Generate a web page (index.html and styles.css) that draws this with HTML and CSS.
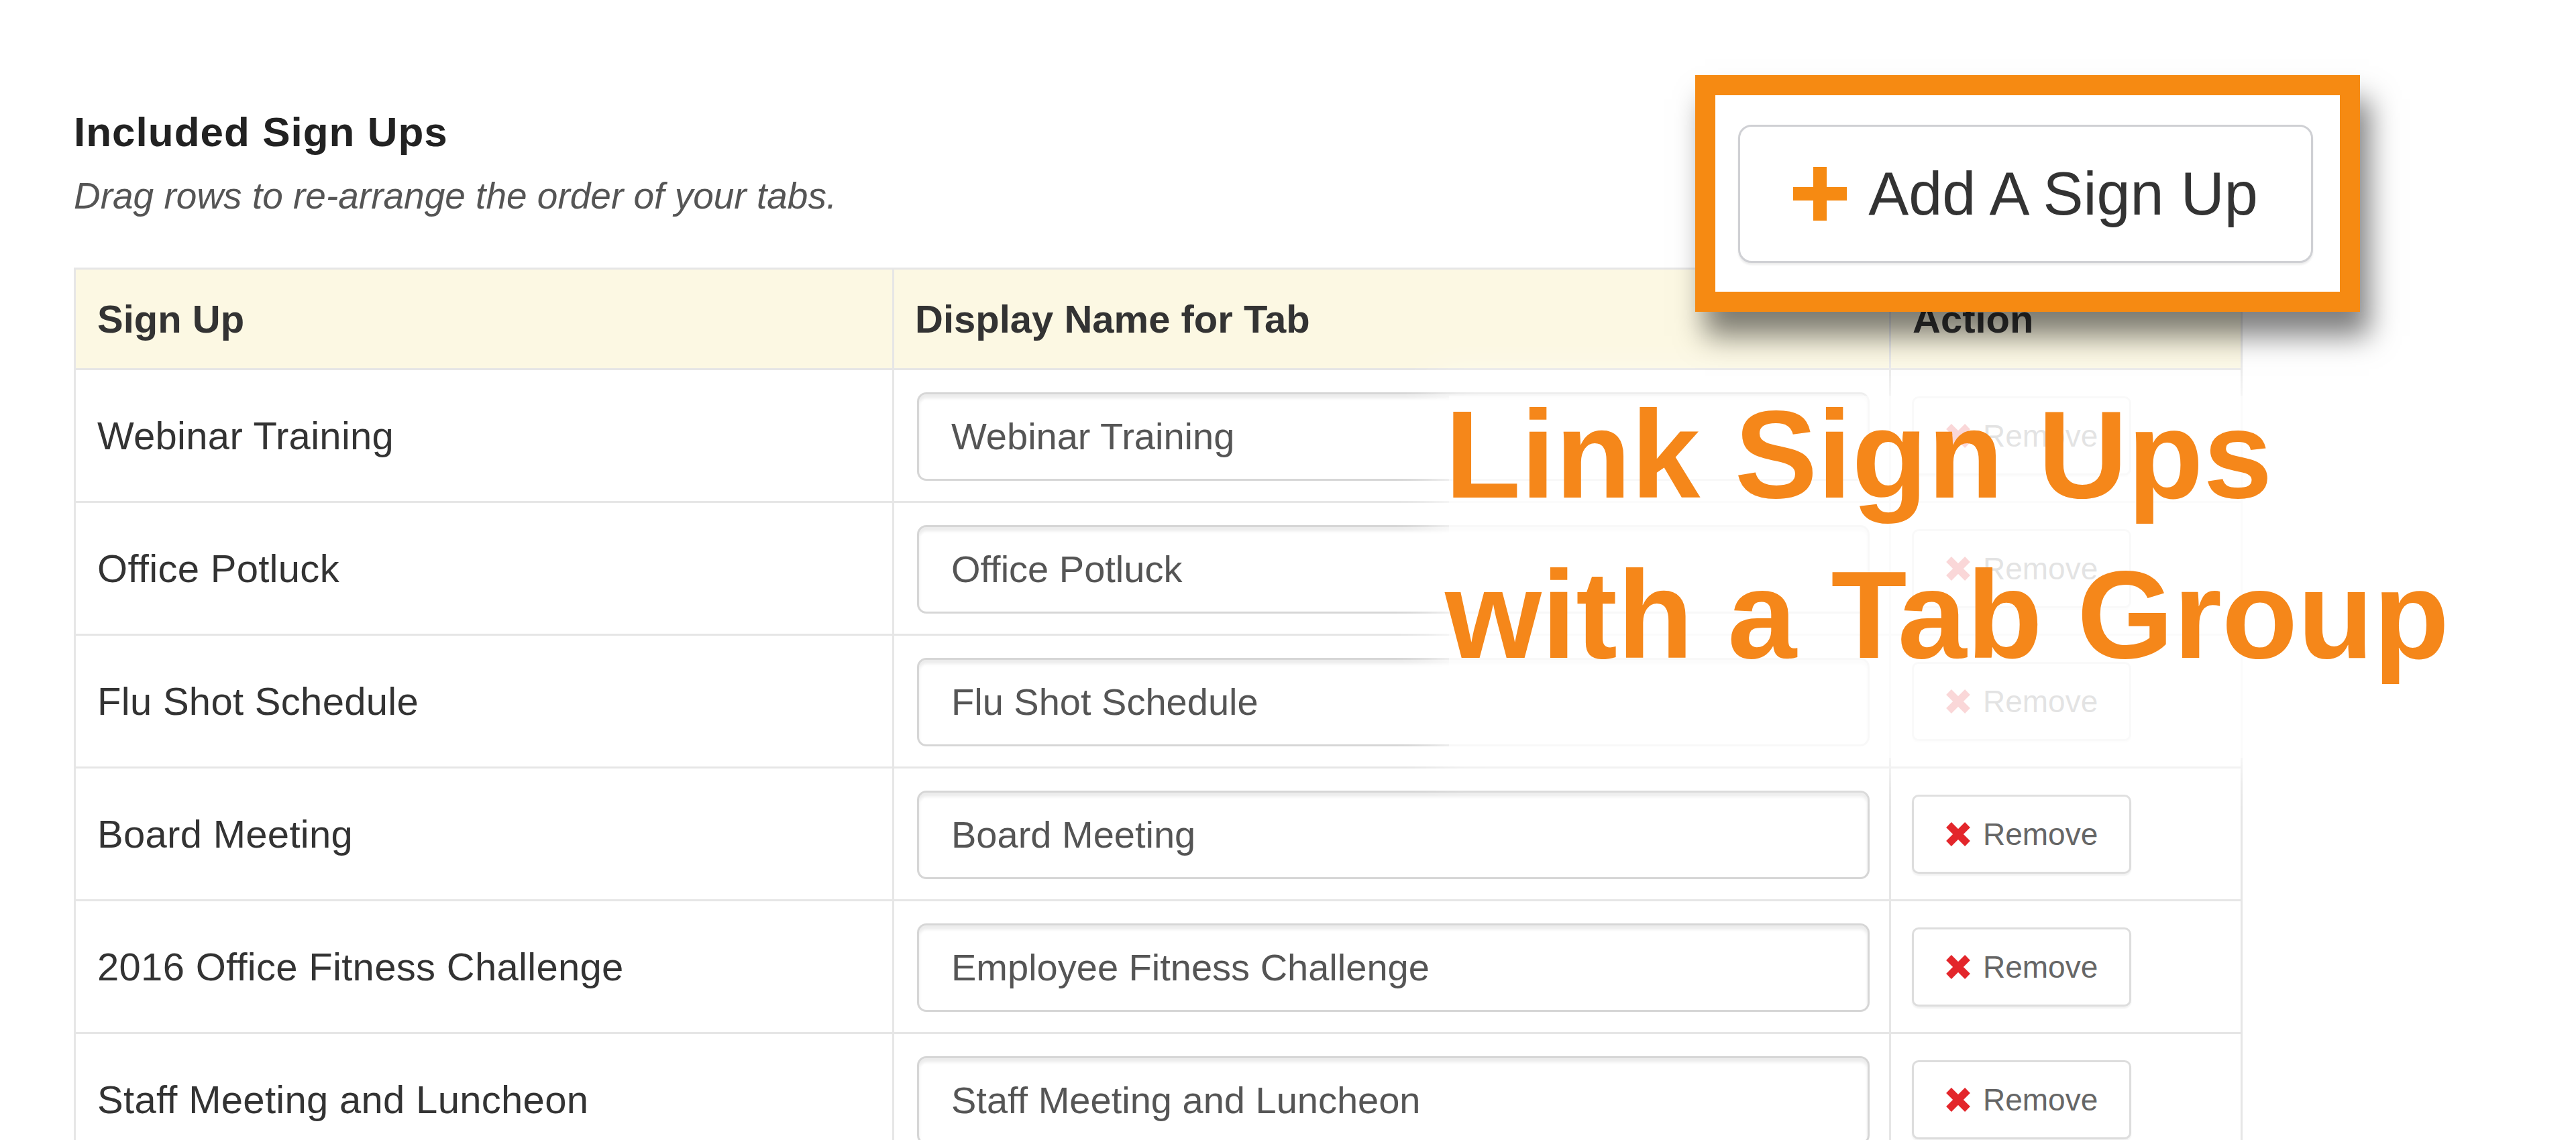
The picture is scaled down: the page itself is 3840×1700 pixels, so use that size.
FILE: index.html
```html
<!DOCTYPE html>
<html lang="en">
<head>
<meta charset="utf-8">
<title>Included Sign Ups</title>
<link rel="stylesheet" href="styles.css">
</head>
<body>
<div class="page">
  <section class="signups">
    <h2 class="title">Included Sign Ups</h2>
    <p class="hint">Drag rows to re-arrange the order of your tabs.</p>
    <table class="grid">
      <colgroup>
        <col class="col-name">
        <col class="col-display">
        <col class="col-action">
      </colgroup>
      <thead>
        <tr>
          <th class="c1">Sign Up</th>
          <th class="c2">Display Name for Tab</th>
          <th class="c3">Action</th>
        </tr>
      </thead>
      <tbody>
        <tr>
          <td class="c1">Webinar Training</td>
          <td class="c2"><div class="field">Webinar Training</div></td>
          <td class="c3"><button class="remove" type="button"><svg class="x" viewBox="0 0 40 38" width="40" height="38"><path d="M6 5 L34 33 M34 5 L6 33" stroke="#e3262b" stroke-width="11" fill="none"/></svg><span>Remove</span></button></td>
        </tr>
        <tr>
          <td class="c1">Office Potluck</td>
          <td class="c2"><div class="field">Office Potluck</div></td>
          <td class="c3"><button class="remove" type="button"><svg class="x" viewBox="0 0 40 38" width="40" height="38"><path d="M6 5 L34 33 M34 5 L6 33" stroke="#e3262b" stroke-width="11" fill="none"/></svg><span>Remove</span></button></td>
        </tr>
        <tr>
          <td class="c1">Flu Shot Schedule</td>
          <td class="c2"><div class="field">Flu Shot Schedule</div></td>
          <td class="c3"><button class="remove" type="button"><svg class="x" viewBox="0 0 40 38" width="40" height="38"><path d="M6 5 L34 33 M34 5 L6 33" stroke="#e3262b" stroke-width="11" fill="none"/></svg><span>Remove</span></button></td>
        </tr>
        <tr>
          <td class="c1">Board Meeting</td>
          <td class="c2"><div class="field">Board Meeting</div></td>
          <td class="c3"><button class="remove" type="button"><svg class="x" viewBox="0 0 40 38" width="40" height="38"><path d="M6 5 L34 33 M34 5 L6 33" stroke="#e3262b" stroke-width="11" fill="none"/></svg><span>Remove</span></button></td>
        </tr>
        <tr>
          <td class="c1">2016 Office Fitness Challenge</td>
          <td class="c2"><div class="field">Employee Fitness Challenge</div></td>
          <td class="c3"><button class="remove" type="button"><svg class="x" viewBox="0 0 40 38" width="40" height="38"><path d="M6 5 L34 33 M34 5 L6 33" stroke="#e3262b" stroke-width="11" fill="none"/></svg><span>Remove</span></button></td>
        </tr>
        <tr>
          <td class="c1">Staff Meeting and Luncheon</td>
          <td class="c2"><div class="field">Staff Meeting and Luncheon</div></td>
          <td class="c3"><button class="remove" type="button"><svg class="x" viewBox="0 0 40 38" width="40" height="38"><path d="M6 5 L34 33 M34 5 L6 33" stroke="#e3262b" stroke-width="11" fill="none"/></svg><span>Remove</span></button></td>
        </tr>
      </tbody>
    </table>
  </section>

  <div class="veil"></div>
  <div class="callout-text">Link Sign Ups<br>with a Tab Group</div>

  <div class="callout-box">
    <button class="add-btn" type="button"><svg class="plus" viewBox="0 0 80 80" width="80" height="80"><path d="M30 0h20v30h30v20H50v30H30V50H0V30h30z" fill="#f68a12"/></svg><span>Add A Sign Up</span></button>
  </div>
</div>
</body>
</html>
```

FILE: styles.css
```css
* {
  box-sizing: border-box;
}

html,
body {
  margin: 0;
  padding: 0;
  background: #ffffff;
}

body {
  width: 3840px;
  height: 1700px;
  overflow: hidden;
  font-family: "Liberation Sans", Arial, Helvetica, sans-serif;
  color: #333333;
}

.page {
  position: relative;
  width: 3840px;
  height: 1700px;
  overflow: hidden;
}

.signups {
  padding: 160px 0 0 110px;
}

.title {
  margin: 0;
  font-size: 62px;
  line-height: 74px;
  font-weight: 700;
  color: #222222;
  letter-spacing: 1px;
}

.hint {
  margin: 25px 0 0;
  font-size: 55px;
  line-height: 66px;
  font-style: italic;
  color: #555555;
}

.grid {
  margin-top: 74px;
  border-collapse: collapse;
  table-layout: fixed;
  width: 3230px;
}

.col-name {
  width: 1220px;
}

.col-display {
  width: 1486px;
}

.col-action {
  width: 524px;
}

.grid th,
.grid td {
  border: 3px solid #e6e6e6;
  padding: 0 32px;
  text-align: left;
  vertical-align: middle;
  white-space: nowrap;
}

.grid th {
  height: 150px;
  background: #fcf8e3;
  font-size: 58px;
  font-weight: 700;
  color: #333333;
}

.grid td {
  height: 198px;
  font-size: 58px;
  letter-spacing: 0.3px;
  color: #333333;
}

.grid th.c2 {
  padding: 0 29px 0 31px;
}

.grid td.c2 {
  padding: 0 29px 0 34px;
}

.grid td.c3 {
  padding: 0 0 0 31px;
}

.field {
  height: 132px;
  margin-top: 2px;
  display: flex;
  align-items: center;
  padding: 0 0 0 48px;
  border: 3px solid #d6d6d6;
  border-radius: 14px;
  box-shadow: inset 0 6px 4px rgba(0, 0, 0, 0.08);
  background: #ffffff;
  font-size: 56px;
  letter-spacing: 0;
  color: #555555;
}

.remove {
  display: flex;
  align-items: center;
  gap: 17px;
  width: 327px;
  height: 118px;
  padding: 0 0 0 46px;
  border: 3px solid #dddddd;
  border-radius: 10px;
  background: #ffffff;
  box-shadow: 0 3px 2px rgba(0, 0, 0, 0.05);
  font-family: "Liberation Sans", Arial, Helvetica, sans-serif;
  font-size: 46px;
  letter-spacing: 0;
  color: #666666;
}

.x {
  flex: none;
  overflow: visible;
}

.veil {
  position: absolute;
  left: 2160px;
  top: 590px;
  width: 1250px;
  height: 540px;
  background: rgba(255, 255, 255, 0.82);
  box-shadow: 0 0 60px 20px rgba(255, 255, 255, 0.82);
}

.callout-text {
  position: absolute;
  left: 2154px;
  top: 559px;
  font-size: 185px;
  line-height: 239px;
  font-weight: 700;
  color: #f5871a;
  white-space: nowrap;
}

.callout-box {
  position: absolute;
  left: 2527px;
  top: 112px;
  width: 991px;
  height: 353px;
  padding: 44px 40px 43px 34px;
  border: 30px solid #f68a12;
  background: #ffffff;
  box-shadow: 14px 36px 40px rgba(0, 0, 0, 0.5);
}

.add-btn {
  width: 100%;
  height: 100%;
  display: flex;
  align-items: center;
  justify-content: center;
  gap: 32px;
  border: 3px solid #cfd0d4;
  border-radius: 20px;
  background: #ffffff;
  box-shadow: 0 3px 3px rgba(0, 0, 0, 0.08);
  font-family: "Liberation Sans", Arial, Helvetica, sans-serif;
  font-size: 90px;
  color: #333333;
}

.plus {
  flex: none;
}
```
